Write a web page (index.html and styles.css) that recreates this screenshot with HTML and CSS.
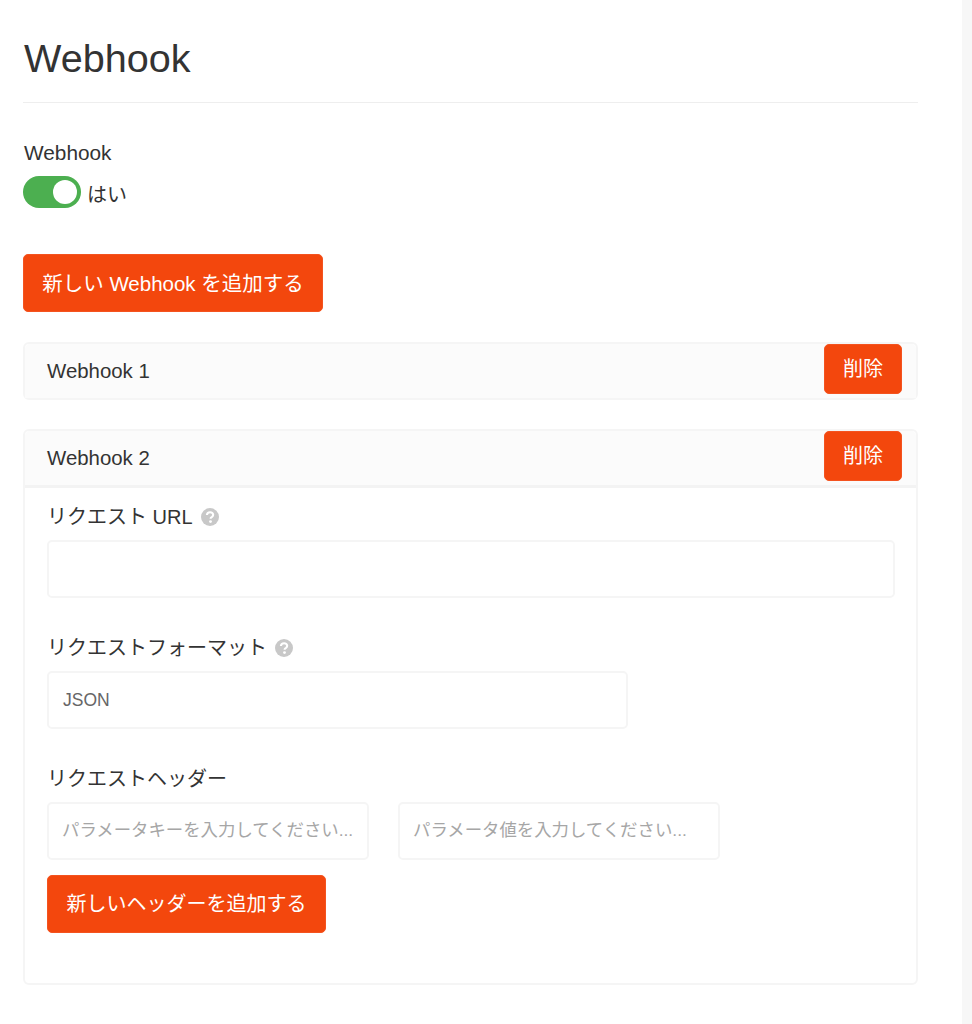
FILE: index.html
```html
<!DOCTYPE html>
<html lang="ja">
<head>
<meta charset="utf-8">
<title>Webhook</title>
<link rel="stylesheet" href="styles.css">
</head>
<body>
<div class="layout">
  <main class="main">
    <h1 class="title">Webhook</h1>
    <div class="label toggle-label">Webhook</div>
    <div class="toggle-row">
      <span class="toggle"><span class="knob"></span></span>
      <span class="toggle-text">はい</span>
    </div>
    <button class="btn btn-add" type="button">新しい Webhook を追加する</button>

    <section class="panel panel-closed">
      <div class="panel-head">
        <span class="panel-name">Webhook 1</span>
        <button class="btn btn-del" type="button">削除</button>
      </div>
    </section>

    <section class="panel panel-open">
      <div class="panel-head panel-head-open">
        <span class="panel-name">Webhook 2</span>
        <button class="btn btn-del" type="button">削除</button>
      </div>
      <div class="panel-body">
        <div class="label field-label">リクエスト URL
          <svg class="help" viewBox="0 0 18 18" aria-hidden="true"><circle cx="9" cy="9" r="9" fill="#c8c8c8"/><path d="M5.9 7C6 5.2 7.3 4.2 9.1 4.2c1.9 0 3.1 1.1 3.1 2.6 0 1.1-.6 1.7-1.5 2.3-.9.5-1.1.9-1.1 1.7" fill="none" stroke="#fff" stroke-width="2.1"/><circle cx="9.5" cy="13.6" r="1.4" fill="#fff"/></svg>
        </div>
        <input class="input input-full" type="text">

        <div class="label field-label field-gap">リクエストフォーマット
          <svg class="help" viewBox="0 0 18 18" aria-hidden="true"><circle cx="9" cy="9" r="9" fill="#c8c8c8"/><path d="M5.9 7C6 5.2 7.3 4.2 9.1 4.2c1.9 0 3.1 1.1 3.1 2.6 0 1.1-.6 1.7-1.5 2.3-.9.5-1.1.9-1.1 1.7" fill="none" stroke="#fff" stroke-width="2.1"/><circle cx="9.5" cy="13.6" r="1.4" fill="#fff"/></svg>
        </div>
        <div class="input input-select">JSON</div>

        <div class="label field-label field-gap">リクエストヘッダー</div>
        <div class="header-row">
          <input class="input input-half" type="text" placeholder="パラメータキーを入力してください...">
          <input class="input input-half" type="text" placeholder="パラメータ値を入力してください...">
        </div>
        <button class="btn btn-header" type="button">新しいヘッダーを追加する</button>
      </div>
    </section>
  </main>
  <div class="scrollbar"></div>
</div>
</body>
</html>
```

FILE: styles.css
```css
* { box-sizing: border-box; }
html, body { margin: 0; height: 100%; }
body {
  background: #fff;
  color: #333;
  font-family: "Liberation Sans", "Noto Sans CJK JP", sans-serif;
  font-size: 20px;
  overflow: hidden;
}
.layout { display: flex; height: 1024px; }
.main { width: 962px; padding: 0 44px 0 23px; }
.scrollbar { width: 10px; background: #f7f7f7; }

.title {
  margin: 0;
  height: 103px;
  padding: 34px 0 0 1px;
  font-size: 39.6px;
  line-height: 48px;
  font-weight: 400;
  border-bottom: 1px solid #eee;
}
.label { font-size: 20.8px; line-height: 28px; color: #333; }
.toggle-label { margin-top: 36px; padding-left: 1px; }
.toggle-row { display: flex; align-items: center; gap: 6px; margin-top: 9px; height: 32px; }
.toggle {
  display: flex;
  justify-content: flex-end;
  align-items: center;
  width: 58px;
  height: 32px;
  padding-right: 4px;
  border-radius: 16px;
  background: #4caf50;
}
.knob { width: 24px; height: 24px; border-radius: 50%; background: #fff; }
.toggle-text { font-size: 20px; line-height: 32px; padding-top: 5px; }

.btn {
  display: block;
  border: 1px solid #f4531f;
  border-radius: 5px;
  background: #f3470d;
  color: #fff;
  font-family: inherit;
  font-size: 20.5px;
  padding: 0 0 3px;
}
.btn-add { width: 300px; height: 58px; margin-top: 46px; }
.btn-del { width: 78px; height: 50px; font-size: 20px; }
.btn-header { width: 279px; height: 58px; margin-top: 15px; font-size: 20px; }

.panel { border: 2px solid #f5f5f5; border-radius: 6px; }
.panel-closed { margin-top: 30px; height: 58px; }
.panel-open { margin-top: 29px; height: 556px; }
.panel-head {
  display: flex;
  justify-content: space-between;
  align-items: flex-start;
  height: 54px;
  padding: 0 14px 0 22px;
  background: #fbfbfb;
  border-radius: 5px 5px 0 0;
}
.panel-head-open { height: 57px; border-bottom: 3px solid #f3f3f3; }
.panel-name { font-size: 20.4px; line-height: 55px; }
.panel-body { padding: 14px 22px 0; }

.field-label { display: flex; align-items: center; gap: 8px; height: 28px; padding-top: 2px; font-size: 20px; }
.field-gap { margin-top: 35px; }
.help { width: 18px; height: 18px; flex: none; }

.input {
  display: block;
  height: 58px;
  border: 2px solid #f5f5f5;
  border-radius: 5px;
  background: #fff;
  color: #666;
  font-family: inherit;
  font-size: 17.5px;
  padding: 0 14px;
  outline: none;
}
.input::placeholder { color: #a6a6a6; opacity: 1; }
.input-full { width: 848px; margin-top: 10px; }
.input-select { width: 581px; margin-top: 10px; line-height: 54px; }
.input-half { width: 322px; font-size: 17.4px; padding: 0 11px 2px 13px; text-overflow: ellipsis; }
.header-row { display: flex; gap: 29px; margin-top: 10px; }
```
